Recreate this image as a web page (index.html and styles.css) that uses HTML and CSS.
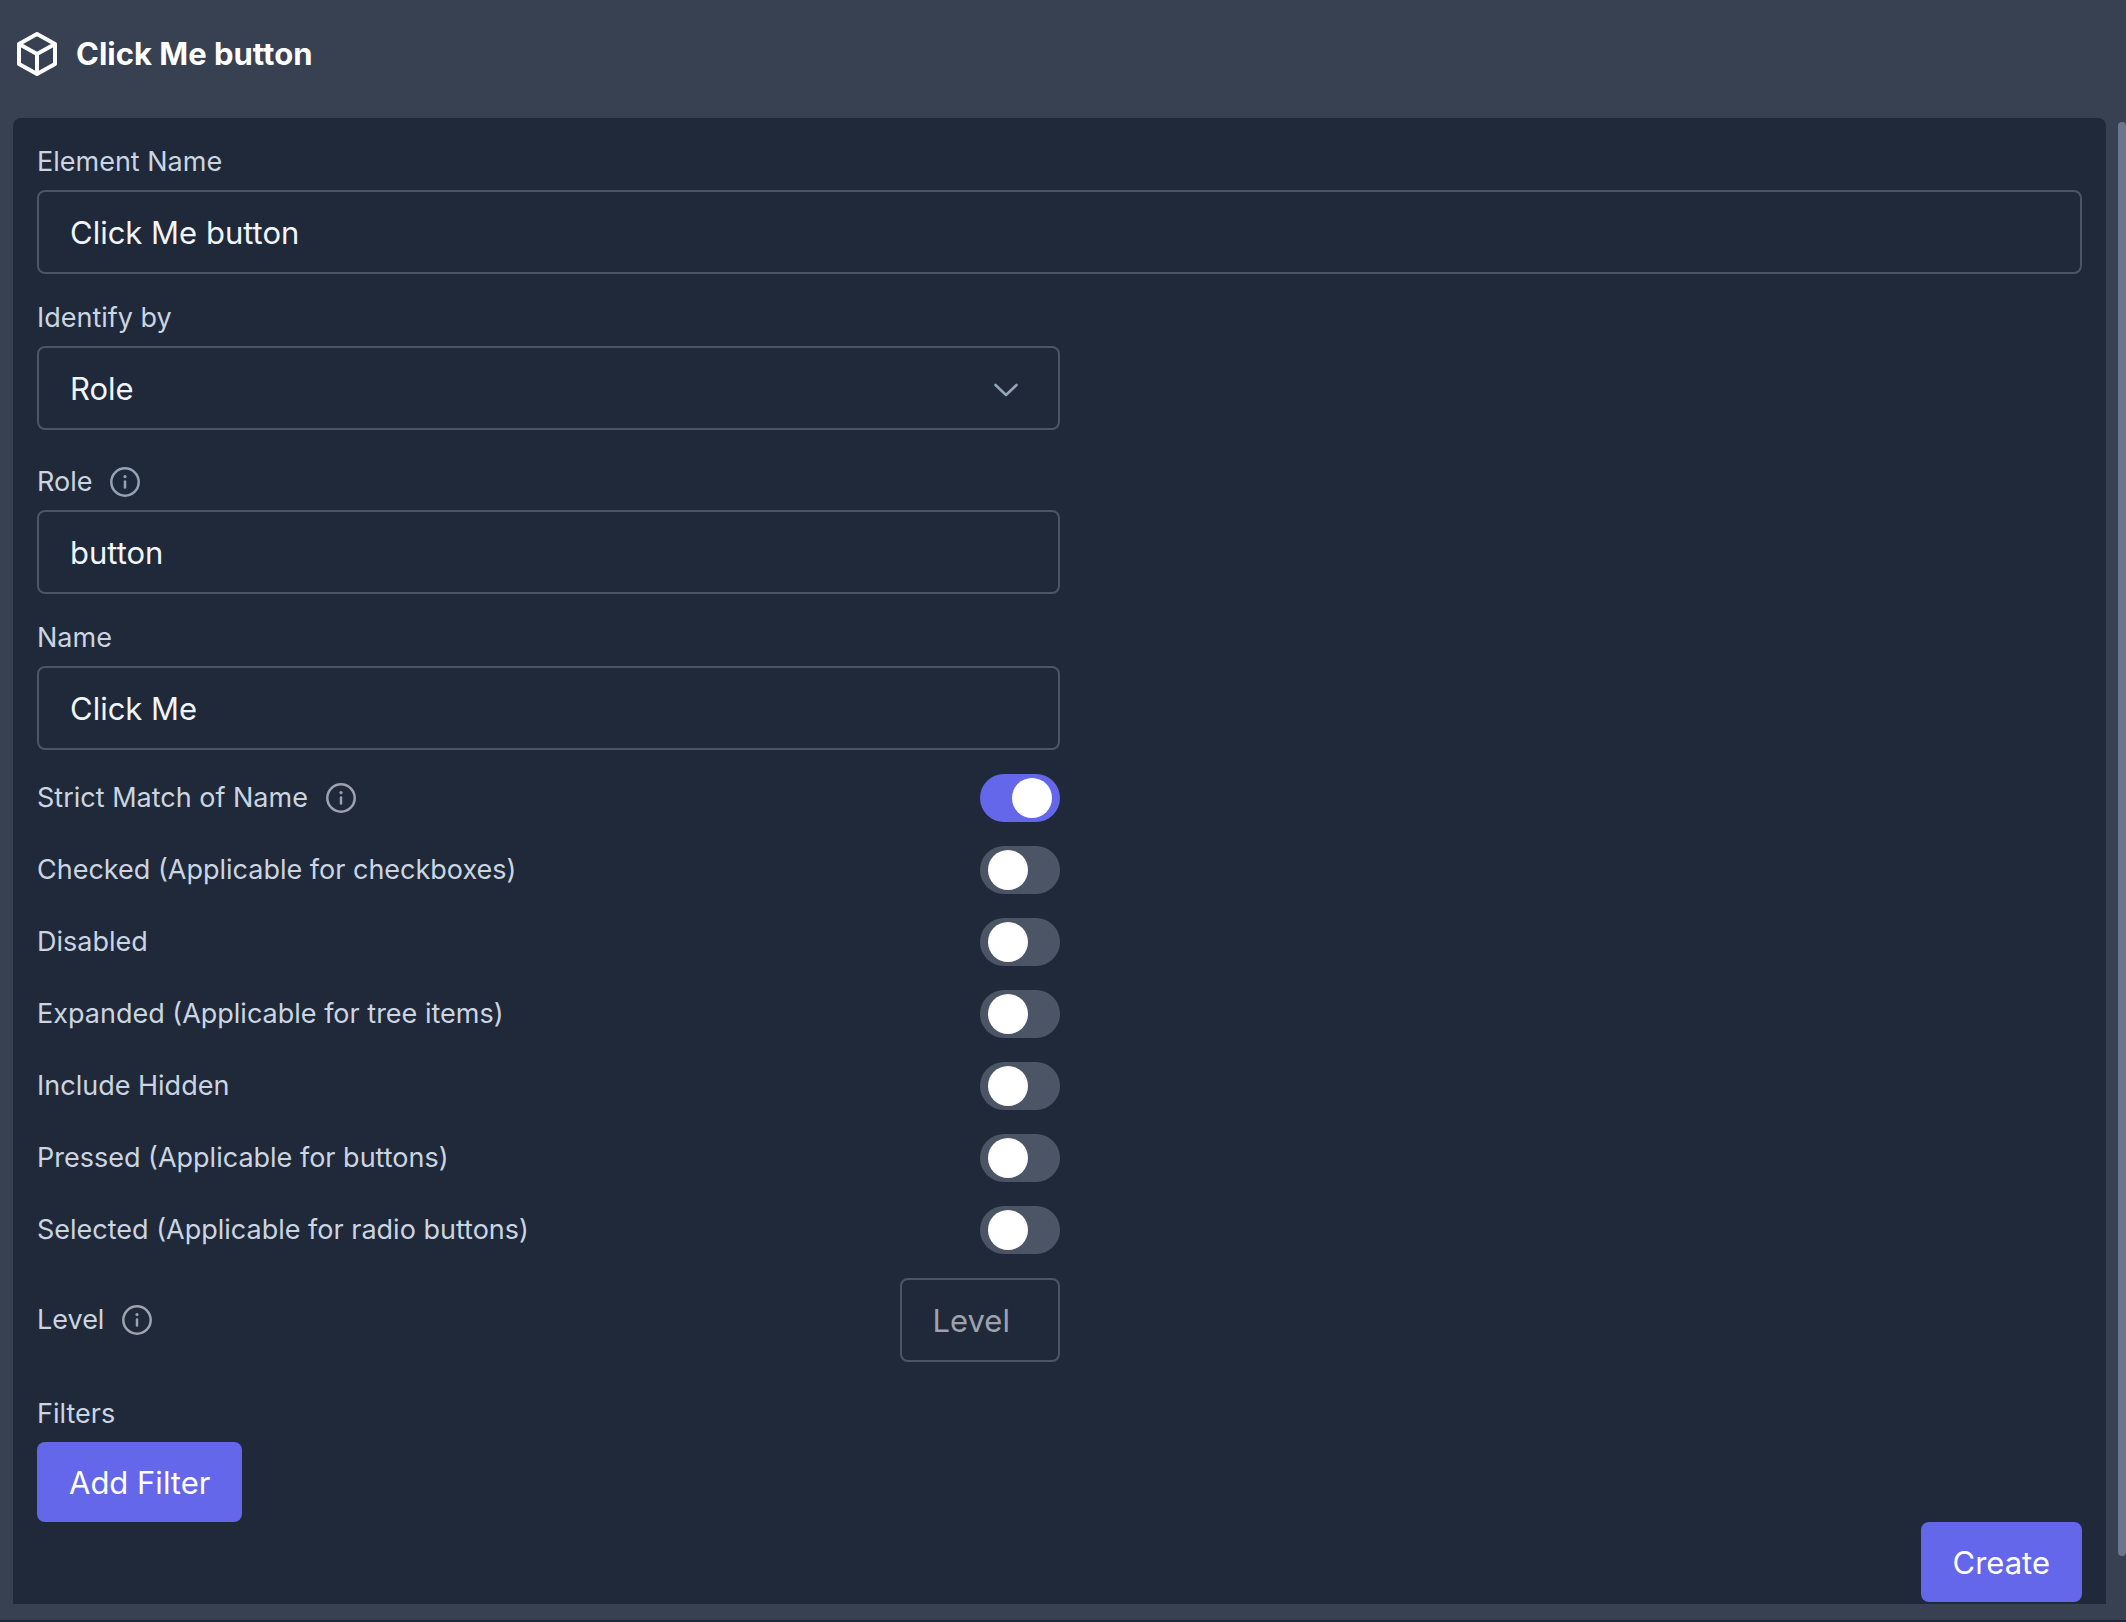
FILE: index.html
```html
<!DOCTYPE html>
<html lang="en">
<head>
<meta charset="utf-8">
<meta name="viewport" content="width=device-width, initial-scale=1">
<title>Click Me button</title>
<link rel="stylesheet" href="styles.css">
</head>
<body>
<svg class="symbols" aria-hidden="true">
  <symbol id="icon-info" viewBox="0 0 30 30">
    <circle cx="15" cy="15" r="13.7" fill="none" stroke="currentColor" stroke-width="2.5"/>
    <circle cx="15" cy="9.6" r="1.6" fill="currentColor"/>
    <path d="M15 14.4v6" fill="none" stroke="currentColor" stroke-width="2.5" stroke-linecap="round"/>
  </symbol>
</svg>

<header class="header">
  <svg class="header-icon" viewBox="0 0 40 44" fill="none" stroke="currentColor" stroke-width="4" stroke-linecap="round" stroke-linejoin="round" aria-hidden="true">
    <path d="M38 12 20 2 2 12v20l18 10 18-10zM2 12l18 10 18-10M20 22v20"/>
  </svg>
  <h1 class="title">Click Me button</h1>
</header>

<div class="content">
  <form class="panel">
    <div class="group">
      <div class="field">
        <label class="label" for="element-name">Element Name</label>
        <input class="input" id="element-name" type="text" value="Click Me button">
      </div>
      <div class="field half">
        <label class="label" for="identify-by">Identify by</label>
        <select class="input select" id="identify-by"><option>Role</option></select>
      </div>
    </div>

    <div class="group half">
      <div class="field">
        <label class="label" for="role">Role <svg class="info slate" aria-hidden="true"><use href="#icon-info"/></svg></label>
        <input class="input" id="role" type="text" value="button">
      </div>
      <div class="field">
        <label class="label" for="name">Name</label>
        <input class="input" id="name" type="text" value="Click Me">
      </div>
      <div class="row">
        <label class="label" for="strict">Strict Match of Name <svg class="info" aria-hidden="true"><use href="#icon-info"/></svg></label>
        <input class="toggle" id="strict" type="checkbox" role="switch" checked>
      </div>
      <div class="row">
        <label class="label" for="checked">Checked (Applicable for checkboxes)</label>
        <input class="toggle" id="checked" type="checkbox" role="switch">
      </div>
      <div class="row">
        <label class="label" for="disabled">Disabled</label>
        <input class="toggle" id="disabled" type="checkbox" role="switch">
      </div>
      <div class="row">
        <label class="label" for="expanded">Expanded (Applicable for tree items)</label>
        <input class="toggle" id="expanded" type="checkbox" role="switch">
      </div>
      <div class="row">
        <label class="label" for="hidden">Include Hidden</label>
        <input class="toggle" id="hidden" type="checkbox" role="switch">
      </div>
      <div class="row">
        <label class="label" for="pressed">Pressed (Applicable for buttons)</label>
        <input class="toggle" id="pressed" type="checkbox" role="switch">
      </div>
      <div class="row">
        <label class="label" for="selected">Selected (Applicable for radio buttons)</label>
        <input class="toggle" id="selected" type="checkbox" role="switch">
      </div>
      <div class="row">
        <label class="label" for="level">Level <svg class="info" aria-hidden="true"><use href="#icon-info"/></svg></label>
        <input class="input level" id="level" type="text" inputmode="numeric" placeholder="Level">
      </div>
    </div>

    <div class="field">
      <h2 class="label">Filters</h2>
      <button class="button" type="button">Add Filter</button>
    </div>
    <button class="button submit" type="submit">Create</button>
  </form>
  <div class="scrollbar" aria-hidden="true"></div>
</div>
</body>
</html>
```

FILE: styles.css
```css
* {
  box-sizing: border-box;
}

body {
  margin: 0;
  min-height: 100vh;
  display: flex;
  flex-direction: column;
  background: #374152;
  border-bottom: 2px solid #202939;
  color: #fff;
  font-family: Inter, "Liberation Sans", sans-serif;
  font-size: 31px;
}

.symbols {
  display: none;
}

.header {
  display: flex;
  align-items: center;
  gap: 19px;
  padding: 30px 17px 40px;
}

.header-icon {
  width: 40px;
  height: 44px;
}

.title {
  margin: 0;
  font-size: 31px;
  font-weight: 700;
  line-height: 48px;
}

.content {
  flex: 1;
  display: flex;
  gap: 12px;
  padding: 0 0 16px 13px;
}

.panel {
  flex: 1;
  display: flex;
  flex-direction: column;
  padding: 24px 24px 2px;
  background: #202939;
  border-radius: 8px 8px 0 0;
}

.scrollbar {
  width: 8px;
  margin: 4px 0 48px;
  background: #6b758b;
  border-radius: 4px;
}

.group {
  display: flex;
  flex-direction: column;
  gap: 24px;
  margin-bottom: 32px;
}

.field {
  display: flex;
  flex-direction: column;
  align-items: flex-start;
  gap: 8px;
}

.half {
  width: 50%;
}

.row {
  display: flex;
  align-items: center;
  justify-content: space-between;
}

.label {
  display: flex;
  align-items: center;
  gap: 18px;
  margin: 0;
  color: #cbd5e1;
  font-size: 27px;
  font-weight: 400;
  line-height: 40px;
}

.info {
  width: 30px;
  height: 30px;
  color: #9ca3af;
}

.slate {
  color: #94a3b8;
}

.input {
  width: 100%;
  height: 84px;
  padding: 0 31px;
  background: transparent;
  border: 2px solid #4b5563;
  border-radius: 8px;
  color: #f1f5f9;
  font: inherit;
}

.input::placeholder {
  color: #9ca3af;
  opacity: 1;
}

.select {
  appearance: none;
  background: url("data:image/svg+xml,%3Csvg xmlns='http://www.w3.org/2000/svg' viewBox='0 0 24 18' fill='none' stroke='%2394a3b8' stroke-width='2.6' stroke-linecap='round' stroke-linejoin='round'%3E%3Cpath d='M1.5 6 12 16l10.500-10'/%3E%3C/svg%3E") no-repeat right 40px center / 24px 18px;
}

.level {
  width: 160px;
}

.toggle {
  appearance: none;
  display: flex;
  width: 80px;
  height: 48px;
  margin: 0;
  padding: 4px 8px;
  background: #4b5565;
  border-radius: 24px;
}

.toggle::before {
  content: "";
  width: 40px;
  height: 40px;
  background: #fff;
  border-radius: 50%;
}

.toggle:checked {
  justify-content: flex-end;
  background: #6467e9;
}

.button {
  height: 80px;
  padding: 0 32px;
  background: #6467e9;
  border: 0;
  border-radius: 8px;
  color: #fff;
  font: inherit;
}

.submit {
  align-self: flex-end;
}
```
